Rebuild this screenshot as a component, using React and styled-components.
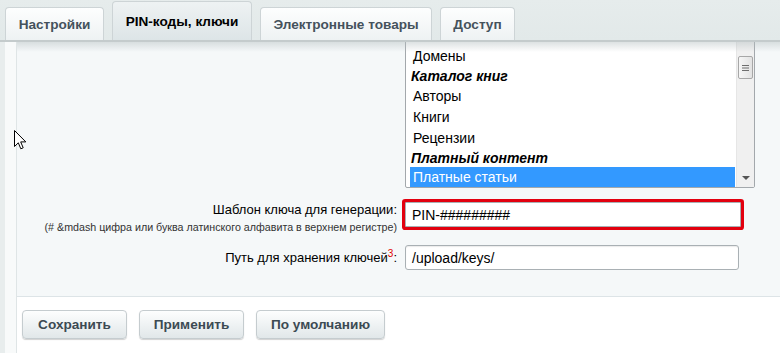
import React from 'react';
import styled, { createGlobalStyle } from 'styled-components';

const GlobalStyle = createGlobalStyle`
  html, body {
    margin: 0;
    padding: 0;
    background: #ffffff;
    font-family: "Liberation Sans", Arial, sans-serif;
  }
`;

const Page = styled.div`
  position: relative;
  width: 780px;
  height: 353px;
  overflow: hidden;
  background: #ffffff;
`;

const TabBar = styled.div`
  display: flex;
  align-items: flex-end;
  gap: 8px;
  height: 40px;
  padding-left: 5px;
  background: linear-gradient(to bottom, #e6ecec, #e2e9e9);
  border-bottom: 2px solid #c4cbcc;
`;

const Tab = styled.div`
  display: flex;
  align-items: center;
  justify-content: center;
  box-sizing: border-box;
  width: ${props => props.width};
  height: ${props => (props.active ? '39px' : '33px')};
  border: 1px solid #cdd4d6;
  border-bottom: none;
  border-radius: 4px 4px 0 0;
  background: ${props =>
    props.active
      ? 'linear-gradient(to bottom, #eef2f3, #dde5e7)'
      : 'linear-gradient(to bottom, #fdfefe, #eef2f3)'};
  color: ${props => (props.active ? '#000000' : '#45525c')};
  font-size: 13.6px;
  font-weight: bold;
  white-space: nowrap;
`;

const Body = styled.div`
  display: flex;
  height: 311px;
`;

const SideStrip = styled.div`
  width: 11px;
  flex-shrink: 0;
  border-left: 5px solid #e8eded;
  border-right: 1px solid #dfe5e6;
  background: #f8fafa;
`;

const Main = styled.div`
  flex: 1;
  display: flex;
  flex-direction: column;
`;

const Panel = styled.div`
  position: relative;
  height: 254px;
  overflow: hidden;
  background: #f5f8f9;
  border-bottom: 1px solid #dde4e7;

  &::before {
    content: '';
    position: absolute;
    left: 0;
    right: 0;
    top: 0;
    height: 10px;
    background: linear-gradient(to bottom, rgba(180, 190, 192, 0.45), rgba(245, 248, 249, 0));
    z-index: 2;
  }
`;

const Form = styled.div`
  display: grid;
  grid-template-columns: 380px 1fr;
  column-gap: 8px;
  align-items: start;
`;

const LabelCell = styled.div`
  display: flex;
  flex-direction: column;
  align-items: flex-end;
  text-align: right;
  padding-top: ${props => props.top || '0px'};
  margin-top: ${props => props.gap || '0px'};
`;

const LabelText = styled.span`
  font-size: 13px;
  color: #000000;
  line-height: 15px;
`;

const Note = styled.span`
  margin-top: 4px;
  font-size: 10.7px;
  line-height: 12px;
  color: #333333;
  white-space: nowrap;
`;

const Sup = styled.sup`
  color: #e00000;
  font-size: 10px;
  line-height: 0;
`;

const FieldCell = styled.div`
  margin-top: ${props => props.gap || '0px'};
`;

const Listbox = styled.div`
  display: flex;
  box-sizing: border-box;
  width: 350px;
  height: 150px;
  margin-top: -4px;
  border: 1px solid #a3a8ac;
  border-radius: 2px;
  background: #ffffff;
`;

const Options = styled.div`
  flex: 1;
  padding: 6px 1px 0 4px;
`;

const Option = styled.div`
  display: flex;
  align-items: center;
  height: ${props => (props.group ? '19px' : props.selected ? '20px' : '21px')};
  padding-left: ${props => (props.group ? '1px' : '3px')};
  font-size: 14px;
  font-weight: ${props => (props.group ? 'bold' : 'normal')};
  font-style: ${props => (props.group ? 'italic' : 'normal')};
  color: ${props => (props.selected ? '#ffffff' : '#000000')};
  background: ${props => (props.selected ? '#3399ff' : 'transparent')};
  white-space: nowrap;
`;

const Scrollbar = styled.div`
  display: flex;
  flex-direction: column;
  align-items: center;
  width: 17px;
  background: #f0f0f0;
  border-left: 1px solid #e6e6e6;
`;

const Thumb = styled.div`
  display: flex;
  align-items: center;
  justify-content: center;
  box-sizing: border-box;
  width: 15px;
  height: 23px;
  margin-top: 17px;
  border: 1px solid #a7a7a7;
  border-radius: 2px;
  background: linear-gradient(to right, #f6f6f6, #e2e2e2);
`;

const Arrow = styled.div`
  margin-top: auto;
  margin-bottom: 7px;
  width: 0;
  height: 0;
  border-left: 4px solid transparent;
  border-right: 4px solid transparent;
  border-top: 4px solid #555555;
`;

const TextInput = styled.div`
  display: flex;
  align-items: center;
  box-sizing: border-box;
  width: ${props => props.width};
  height: 25px;
  padding-left: 6px;
  border: 1px solid #a9b0b4;
  border-radius: ${props => (props.error ? '1px' : '3px')};
  background: #ffffff;
  font-size: 14px;
  color: #000000;
  box-shadow: ${props => (props.error ? '0 0 0 3px #e2000f' : 'inset 0 1px 1px rgba(0,0,0,0.08)')};
`;

const ButtonBar = styled.div`
  display: flex;
  gap: 12px;
  padding: 13px 0 0 5px;
`;

const Button = styled.div`
  display: flex;
  align-items: center;
  justify-content: center;
  box-sizing: border-box;
  width: ${props => props.width};
  height: 29px;
  border: 1px solid #c5cccf;
  border-radius: 4px;
  background: linear-gradient(to bottom, #fdfefe, #e1e7e9);
  box-shadow: 0 1px 1px rgba(0, 0, 0, 0.18);
  color: #3c4a53;
  font-size: 13.6px;
  font-weight: bold;
`;

const Cursor = styled.svg`
  position: absolute;
  left: 14px;
  top: 130px;
`;

const Grip = () => (
  <svg width="9" height="8" viewBox="0 0 9 8">
    <path d="M1 1.5h7M1 4h7M1 6.5h7" stroke="#6e6e6e" strokeWidth="1" />
  </svg>
);

const options = [
  { label: 'Домены' },
  { label: 'Каталог книг', group: true },
  { label: 'Авторы' },
  { label: 'Книги' },
  { label: 'Рецензии' },
  { label: 'Платный контент', group: true },
  { label: 'Платные статьи', selected: true }
];

const tabs = [
  { label: 'Настройки', width: '99px' },
  { label: 'PIN-коды, ключи', width: '140px' },
  { label: 'Электронные товары', width: '172px' },
  { label: 'Доступ', width: '75px' }
];

const App = () => {
  return (
    <Page>
      <GlobalStyle />
      <TabBar>
        {tabs.map((t, i) => (
          <Tab key={t.label} width={t.width} active={i === 1}>
            {t.label}
          </Tab>
        ))}
      </TabBar>
      <Body>
        <SideStrip />
        <Main>
          <Panel>
            <Form>
              <LabelCell />
              <FieldCell>
                <Listbox>
                  <Options>
                    {options.map(o => (
                      <Option key={o.label} group={o.group} selected={o.selected}>
                        {o.label}
                      </Option>
                    ))}
                  </Options>
                  <Scrollbar>
                    <Thumb>
                      <Grip />
                    </Thumb>
                    <Arrow />
                  </Scrollbar>
                </Listbox>
              </FieldCell>

              <LabelCell gap="14px">
                <LabelText>Шаблон ключа для генерации:</LabelText>
                <Note>(# &amp;mdash цифра или буква латинского алфавита в верхнем регистре)</Note>
              </LabelCell>
              <FieldCell gap="14px">
                <TextInput width="336px" error>
                  PIN-#########
                </TextInput>
              </FieldCell>

              <LabelCell gap="12px" top="5px">
                <LabelText>
                  Путь для хранения ключей<Sup>3</Sup>:
                </LabelText>
              </LabelCell>
              <FieldCell gap="12px">
                <TextInput width="334px">/upload/keys/</TextInput>
              </FieldCell>
            </Form>
          </Panel>
          <ButtonBar>
            <Button width="105px">Сохранить</Button>
            <Button width="105px">Применить</Button>
            <Button width="129px">По умолчанию</Button>
          </ButtonBar>
        </Main>
      </Body>
      <Cursor width="13" height="21" viewBox="0 0 13 21">
        <path
          d="M0.5 0.5 L0.5 16.5 L4.3 12.8 L6.8 18.8 L9.2 17.8 L6.7 11.9 L11.8 11.9 Z"
          fill="#ffffff"
          stroke="#000000"
          strokeWidth="1"
          strokeLinejoin="miter"
        />
      </Cursor>
    </Page>
  );
};

export default App;
